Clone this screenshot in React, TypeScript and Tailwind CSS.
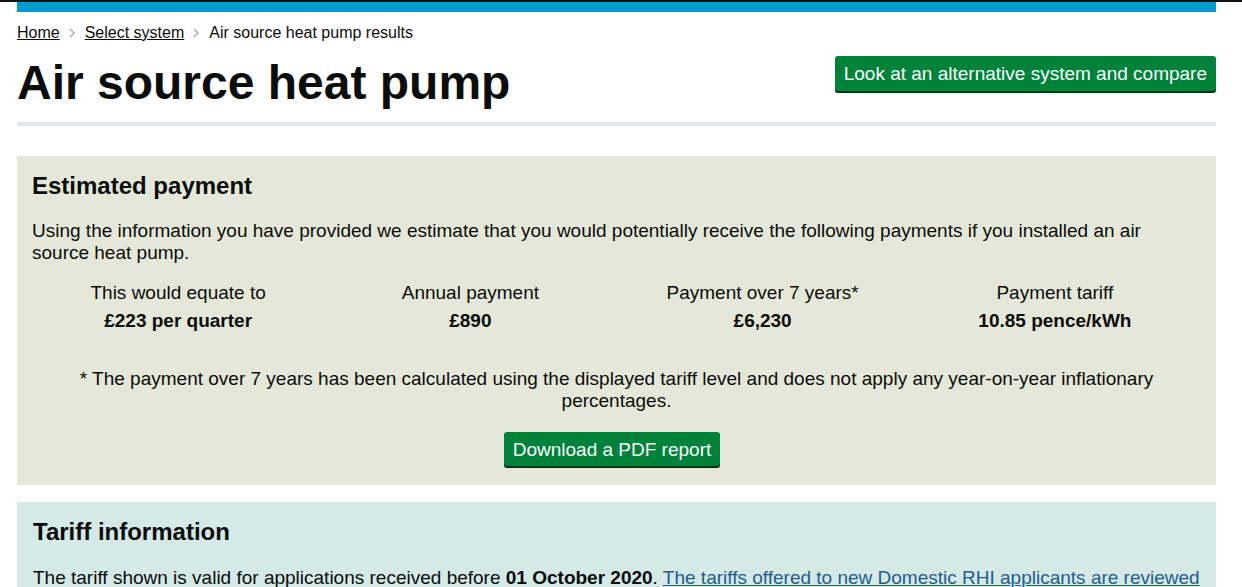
const FONT = { fontFamily: '"Liberation Sans", Arial, sans-serif' };

function Chevron() {
  return (
    <svg width="7" height="10" viewBox="0 0 7 10" className="mx-[9px] inline-block" aria-hidden>
      <path d="M1 1 L5 5 L1 9" fill="none" stroke="#a0a3a6" strokeWidth="1.3" />
    </svg>
  );
}

function GreenButton({ children, className = "" }: { children: React.ReactNode; className?: string }) {
  return (
    <button
      className={`rounded-[3px] bg-[#00823b] text-white text-[19px] leading-[25px] shadow-[0_2px_0_#002d18] ${className}`}
    >
      {children}
    </button>
  );
}

const STATS = [
  { label: "This would equate to", value: "£223 per quarter" },
  { label: "Annual payment", value: "£890" },
  { label: "Payment over 7 years*", value: "£6,230" },
  { label: "Payment tariff", value: "10.85 pence/kWh" },
];

export default function App() {
  return (
    <div className="min-h-screen bg-white text-[#0b0c0c]" style={FONT}>
      <div className="h-[2px] bg-[#111]" />
      <div className="ml-[17px] w-[1199px]">
        <div className="h-[10px] bg-[#009ad7]" />

        <nav className="mt-[11px] flex items-center text-[16px] leading-[20px]">
          <a href="#" className="underline">Home</a>
          <Chevron />
          <a href="#" className="underline">Select system</a>
          <Chevron />
          <span>Air source heat pump results</span>
        </nav>

        <div className="flex items-start justify-between">
          <h1 className="mt-[10px] text-[48px] font-bold leading-[60px]">Air source heat pump</h1>
          <GreenButton className="mt-[13px] h-[35px] px-[9px]">Look at an alternative system and compare</GreenButton>
        </div>

        <div className="mt-[9px] h-[4px] bg-[#dee8f2]" />

        <section className="mt-[30px] bg-[#e5e8d8] px-[15px] pt-[15px] pb-[19px]">
          <h2 className="text-[24px] font-bold leading-[30px]">Estimated payment</h2>
          <p className="mt-[19px] text-[19px] leading-[22px]">
            Using the information you have provided we estimate that you would potentially receive the following
            payments if you installed an air source heat pump.
          </p>
          <div className="mt-[17px] grid grid-cols-4 text-center text-[19px]">
            {STATS.map((s) => (
              <div key={s.label}>
                <div className="leading-[24px]">{s.label}</div>
                <div className="mt-[4px] font-bold leading-[24px]">{s.value}</div>
              </div>
            ))}
          </div>
          <p className="mt-[35px] text-center text-[19px] leading-[22px]">
            * The payment over 7 years has been calculated using the displayed tariff level and does not apply any
            year-on-year inflationary percentages.
          </p>
          <div className="mt-[20px] flex justify-center">
            <GreenButton className="mr-[9px] h-[34px] px-[9px]">Download a PDF report</GreenButton>
          </div>
        </section>

        <section className="mt-[17px] bg-[#d5e9e7] px-[16px] pt-[15px] pb-[20px]">
          <h2 className="text-[24px] font-bold leading-[30px]">Tariff information</h2>
          <p className="mt-[20px] text-[19px] leading-[22px]">
            The tariff shown is valid for applications received before <b>01 October 2020</b>.{" "}
            <a href="#" className="text-[#1d5d90] underline">
              The tariffs offered to new Domestic RHI applicants are reviewed
            </a>{" "}
            every quarter.
          </p>
        </section>
      </div>
    </div>
  );
}
